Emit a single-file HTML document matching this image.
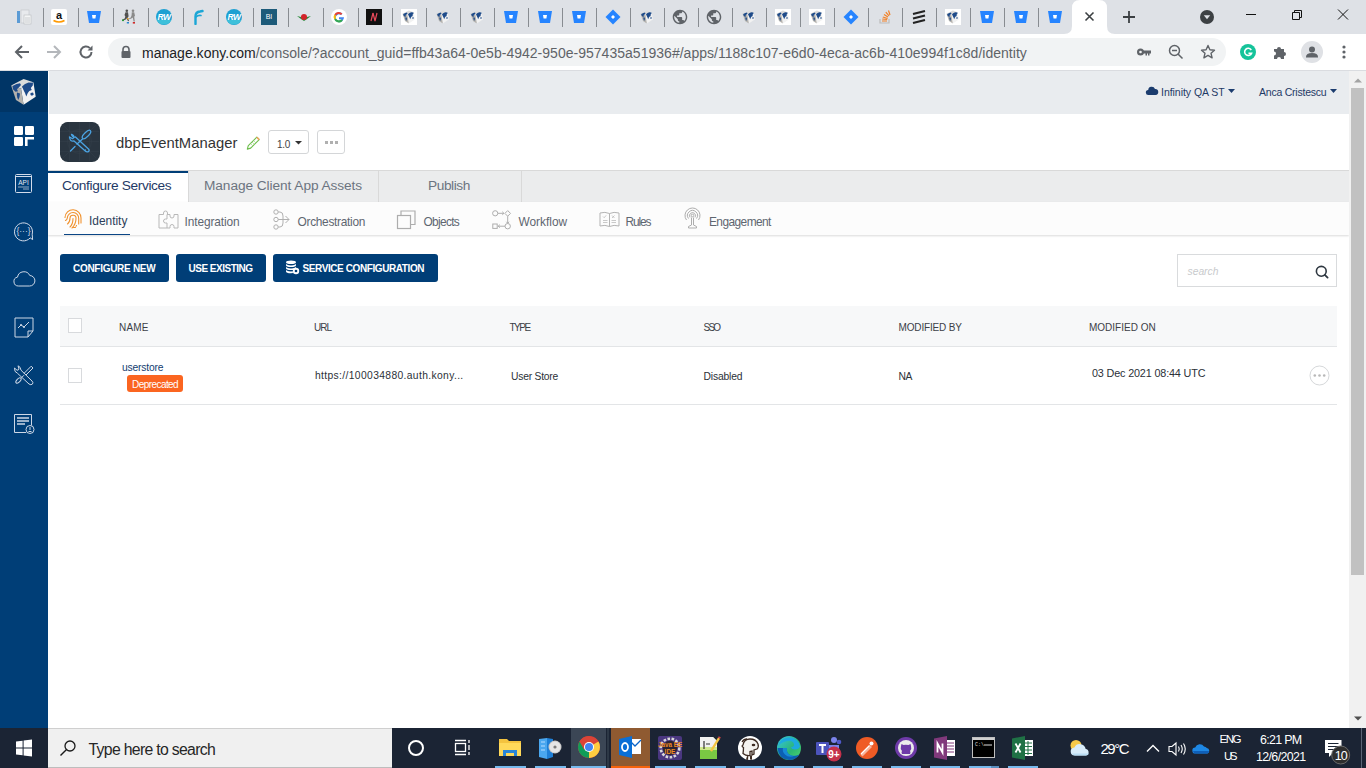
<!DOCTYPE html>
<html><head><meta charset="utf-8">
<style>
*{box-sizing:border-box;margin:0;padding:0}
html,body{width:1366px;height:768px;overflow:hidden;background:#fff;font-family:"Liberation Sans",sans-serif;position:relative}
.abs{position:absolute}
svg.abs{overflow:visible}
#tabstrip{left:0;top:0;width:1366px;height:34px;background:#dee1e6}
.sep{position:absolute;top:8px;width:1px;height:19px;background:#888c91}
.fav{position:absolute;top:9px;width:16px;height:16px}
#acttab{left:1064px;top:0;width:51px;height:34px}
#toolbar{left:0;top:34px;width:1366px;height:36px;background:#fff}
#tbline{left:0;top:70px;width:1366px;height:1px;background:#dadce0}
#omni{left:108px;top:38px;width:1118px;height:28px;border-radius:14px;background:#f1f3f4}
#url{left:142px;top:44px;font-size:14px;line-height:16px;color:#5f6368;white-space:nowrap;letter-spacing:0}
#url b{font-weight:normal;color:#202124}
#sidebar{left:0;top:71px;width:48px;height:657px;background:#003e77}
#sbtop{left:0;top:71px;width:48px;height:41px;background:#003566}
#hdr{left:49px;top:71px;width:1300px;height:43px;background:#e9ecef}
.hdrtxt{position:absolute;top:85px;font-size:10.5px;line-height:12px;color:#1f3a66;white-space:nowrap}
#scroll{left:1349px;top:71px;width:17px;height:657px;background:#f1f1f1}
#thumb{left:1351px;top:88px;width:13px;height:487px;background:#c1c1c1}
#tabs{left:48px;top:170px;width:1301px;height:33px;background:#ebeced;border-top:1px solid #d9d9d9;border-bottom:1px solid #d9d9d9}
#subtabs{left:48px;top:202px;width:1301px;height:33px;background:#fcfcfc;box-shadow:0 1px 2px rgba(0,0,0,.15)}
.tab{position:absolute;top:178px;font-size:13.7px;line-height:16px;color:#6b7480;white-space:nowrap}
.stab{position:absolute;top:214px;font-size:11.9px;line-height:14px;color:#5e6670;white-space:nowrap}
.btn{position:absolute;top:254px;height:28px;background:#003e77;border-radius:3px}
.btxt{position:absolute;top:261px;color:#fff;font-weight:bold;font-size:10px;line-height:14px;white-space:nowrap}
#thead{left:60px;top:306px;width:1277px;height:41px;background:#f7f8f9;border-bottom:1px solid #e3e5e7}
#trow{left:60px;top:347px;width:1277px;height:58px;background:#fff;border-bottom:1px solid #e3e5e7}
.th{position:absolute;top:321px;font-size:10px;line-height:12px;color:#3b4047;white-space:nowrap}
.td{position:absolute;top:369px;font-size:10.3px;line-height:12px;color:#2b3037;white-space:nowrap}
.cb{position:absolute;width:14px;height:15px;border:1px solid #d8dadd;background:#fff}
#taskbar{left:0;top:728px;width:1366px;height:40px;background:#1b2434}
#tsearch{left:48px;top:728px;width:344px;height:40px;background:#f0f0f0;border-top:1px solid #cfcfcf;border-bottom:1px solid #bdbdbd}
</style></head><body>
<svg width="0" height="0" style="position:absolute">
<defs>
<symbol id="i-doc" viewBox="0 0 16 16"><rect x="1" y="2" width="3" height="12" fill="#5b9bd5"/><rect x="5" y="1" width="8" height="13" fill="#e8eaed" stroke="#c0c4c8" stroke-width=".6"/><rect x="8" y="6" width="7" height="9" fill="#f4f5f6" stroke="#b8bcc0" stroke-width=".6"/><path d="M9 9h5M9 11h5M9 13h5" stroke="#b0b4b8" stroke-width=".6"/></symbol>
<symbol id="i-amz" viewBox="0 0 16 16"><rect x="0" y="0" width="16" height="16" rx="2" fill="#fff"/><text x="8" y="10" font-family="Liberation Sans" font-weight="bold" font-size="11" text-anchor="middle" fill="#111">a</text><path d="M2.5 11.5q5.5 3 11 0" stroke="#f90" stroke-width="1.6" fill="none"/></symbol>
<symbol id="i-bb" viewBox="0 0 16 16"><path d="M1 2h14l-2 12H3z" fill="#2684ff"/><path d="M6 6h4l-.6 3.4H6.6z" fill="#fff"/></symbol>
<symbol id="i-run" viewBox="0 0 16 16"><g fill="#505050"><circle cx="5.8" cy="1.8" r="1.3"/><path d="M4.5 3.3h2.5l.6 4-1 1.5 1.5 3-1 .5-1.8-3-.8 1.5-3 .8-.3-.8 2.5-1.2.6-2-.8-1.5z"/></g><g fill="#8a8a8a"><circle cx="12" cy="1.8" r="1.3"/><path d="M10.8 3.3h2.4l.8 3.5-.8 1 .6 4.7h-1.2l-.8-4-1.5 1-2 .7-.3-.8 1.8-1 .8-2.2z"/></g><rect x="1" y="10.5" width="2" height="1.6" fill="#2a9a3a"/><rect x="6" y="9" width="1.6" height="1.4" fill="#e8a020"/><rect x="5.8" y="13" width="2.2" height="1.5" fill="#2a8ad0"/><rect x="11.8" y="13" width="2.2" height="1.6" fill="#d02a2a"/></symbol>
<symbol id="i-rw" viewBox="0 0 16 16"><circle cx="8" cy="8" r="8" fill="#1ea0d2"/><path d="M0.8 11a8 8 0 0 0 14.4 0z" fill="#3ec0da"/><text x="8" y="11.2" font-family="Liberation Sans" font-weight="bold" font-style="italic" font-size="8.5" text-anchor="middle" fill="#fff" letter-spacing="-.6">RW</text></symbol>
<symbol id="i-f" viewBox="0 0 16 16"><path d="M4.5 15V7.5Q4.5 3 9 2.5l2.5-.5" fill="none" stroke="#1ba6d6" stroke-width="2.4" stroke-linecap="round"/><path d="M5 8q2-2 5-1.5" fill="none" stroke="#1ba6d6" stroke-width="1.6" stroke-linecap="round"/></symbol>
<symbol id="i-bi" viewBox="0 0 16 16"><rect width="16" height="16" fill="#1d5b7a"/><text x="8" y="10" font-family="Liberation Sans" font-size="7" text-anchor="middle" fill="#fff">BI</text></symbol>
<symbol id="i-red" viewBox="0 0 16 16"><path d="M1 7l4 1 3-2 3 2 4-1-4 3-3 2-3-2z" fill="#2a8a3a"/><circle cx="8" cy="8" r="3" fill="#d2232a"/></symbol>
<symbol id="i-g" viewBox="0 0 16 16"><circle cx="8" cy="8" r="8" fill="#fff"/><path d="M13 8.2h-5v2h2.8a3.2 3.2 0 1 1-.8-4.2l1.4-1.4A5 5 0 1 0 13 8.2z" fill="#4285f4"/><path d="M3.3 5.5A5 5 0 0 1 11.4 4.6L10 6A3.2 3.2 0 0 0 5 6.6z" fill="#ea4335"/><path d="M3.3 5.5L5 6.6a3.2 3.2 0 0 0 0 2.8L3.3 10.6a5 5 0 0 1 0-5.1z" fill="#fbbc05"/><path d="M3.3 10.6L5 9.4a3.2 3.2 0 0 0 5.2.9l1.6 1.3A5 5 0 0 1 3.3 10.6z" fill="#34a853"/></symbol>
<symbol id="i-nf" viewBox="0 0 16 16"><rect width="16" height="16" fill="#111"/><path d="M5 12l2-8M7 4l2 8M9 12l2-8" stroke="#e84a5a" stroke-width="1.2"/></symbol>
<symbol id="i-cube" viewBox="0 0 32 32"><path d="M3.1 9.4L15.6 3.1 25.4 6.3 13 12.5z" fill="#dcdcdc"/><path d="M13 12.5L25.4 6.3 27.7 20.8 15.6 28.8z" fill="#f2f2f2"/><path d="M3.1 9.4L13 12.5 15.6 28.8 8 24z" fill="#b4b2ae"/><g fill="#1e4b8a"><path d="M4.5 10l4-2 3.5-.8 1 1.8-2 2.2-2 2 1 2-2.5.5-2.5-2.5z"/><path d="M14 10.5l3-2.5 3.5-1.5 4.5.3-.2 2.7-2 2.5 1 2-2.5 1-1.5 2-1.5 3.5-1.3-3.5-1.5-3z"/><path d="M9 16.5l3 1-.5 3.5-1.2 3-1-2.5-.5-2.5z"/><path d="M22.5 17l2.5-.5.8 2-1.8 1.2-1.5-.7z"/></g></symbol>
<symbol id="i-cubew" viewBox="0 0 16 16"><rect width="16" height="16" fill="#fff"/><use href="#i-cube"/></symbol>
<symbol id="i-jira" viewBox="0 0 16 16"><path d="M8 0.5L15.5 8 8 15.5 0.5 8z" fill="#2684ff"/><path d="M8 6L10 8 8 10 6 8z" fill="#fff"/></symbol>
<symbol id="i-globe" viewBox="1 1 22 22"><path d="M12 2C6.48 2 2 6.48 2 12s4.48 10 10 10 10-4.48 10-10S17.52 2 12 2zm-1 17.930c-3.950-.49-7-3.850-7-7.930 0-.62.08-1.210.21-1.790L9 15v1c0 1.100.9 2 2 2v1.930zm6.900-2.540c-.26-.81-1-1.390-1.900-1.390h-1v-3c0-.55-.45-1-1-1H8v-2h2c.55 0 1-.45 1-1V7h2c1.100 0 2-.9 2-2v-.41c2.930 1.190 5 4.060 5 7.410 0 2.080-.8 3.970-2.100 5.390z" fill="#5f6368"/></symbol>
<symbol id="i-so" viewBox="0 0 16 16"><path d="M3 10v4h9v-4" stroke="#bcbbbb" stroke-width="1.2" fill="none"/><path d="M5 12h5M5.2 10l5 .5M5.8 8l4.8 1.5M7 5.5l4 2.5M8.8 3.2l3.2 3.6M11.5 1.5l1.5 4.5" stroke="#f48024" stroke-width="1.2"/></symbol>
<symbol id="i-stripes" viewBox="0 0 16 16"><path d="M2 5l12-3M2 9.5l12-3M2 14l12-3" stroke="#222" stroke-width="2.2"/></symbol>
</defs></svg>

<div id="tabstrip" class="abs"></div>
<div class="sep" style="left:43px"></div>
<div class="sep" style="left:78px"></div>
<div class="sep" style="left:113px"></div>
<div class="sep" style="left:148px"></div>
<div class="sep" style="left:183px"></div>
<div class="sep" style="left:218px"></div>
<div class="sep" style="left:253px"></div>
<div class="sep" style="left:288px"></div>
<div class="sep" style="left:323px"></div>
<div class="sep" style="left:358px"></div>
<div class="sep" style="left:392px"></div>
<div class="sep" style="left:426px"></div>
<div class="sep" style="left:460px"></div>
<div class="sep" style="left:494px"></div>
<div class="sep" style="left:528px"></div>
<div class="sep" style="left:562px"></div>
<div class="sep" style="left:596px"></div>
<div class="sep" style="left:630px"></div>
<div class="sep" style="left:664px"></div>
<div class="sep" style="left:698px"></div>
<div class="sep" style="left:732px"></div>
<div class="sep" style="left:766px"></div>
<div class="sep" style="left:800px"></div>
<div class="sep" style="left:834px"></div>
<div class="sep" style="left:868px"></div>
<div class="sep" style="left:902px"></div>
<div class="sep" style="left:936px"></div>
<div class="sep" style="left:970px"></div>
<div class="sep" style="left:1004px"></div>
<div class="sep" style="left:1038px"></div>
<svg class="fav" style="left:16px" viewBox="0 0 16 16"><use href="#i-doc"/></svg>
<svg class="fav" style="left:51px" viewBox="0 0 16 16"><use href="#i-amz"/></svg>
<svg class="fav" style="left:86px" viewBox="0 0 16 16"><use href="#i-bb"/></svg>
<svg class="fav" style="left:121px" viewBox="0 0 16 16"><use href="#i-run"/></svg>
<svg class="fav" style="left:156px" viewBox="0 0 16 16"><use href="#i-rw"/></svg>
<svg class="fav" style="left:191px" viewBox="0 0 16 16"><use href="#i-f"/></svg>
<svg class="fav" style="left:226px" viewBox="0 0 16 16"><use href="#i-rw"/></svg>
<svg class="fav" style="left:261px" viewBox="0 0 16 16"><use href="#i-bi"/></svg>
<svg class="fav" style="left:296px" viewBox="0 0 16 16"><use href="#i-red"/></svg>
<svg class="fav" style="left:331px" viewBox="0 0 16 16"><use href="#i-g"/></svg>
<svg class="fav" style="left:366px" viewBox="0 0 16 16"><use href="#i-nf"/></svg>
<svg class="fav" style="left:401px" viewBox="0 0 16 16"><use href="#i-cubew"/></svg>
<svg class="fav" style="left:435px" viewBox="0 0 16 16"><use href="#i-cube"/></svg>
<svg class="fav" style="left:469px" viewBox="0 0 16 16"><use href="#i-cube"/></svg>
<svg class="fav" style="left:503px" viewBox="0 0 16 16"><use href="#i-bb"/></svg>
<svg class="fav" style="left:537px" viewBox="0 0 16 16"><use href="#i-bb"/></svg>
<svg class="fav" style="left:571px" viewBox="0 0 16 16"><use href="#i-bb"/></svg>
<svg class="fav" style="left:605px" viewBox="0 0 16 16"><use href="#i-jira"/></svg>
<svg class="fav" style="left:639px" viewBox="0 0 16 16"><use href="#i-cube"/></svg>
<svg class="fav" style="left:672px" viewBox="0 0 16 16"><use href="#i-globe"/></svg>
<svg class="fav" style="left:706px" viewBox="0 0 16 16"><use href="#i-globe"/></svg>
<svg class="fav" style="left:741px" viewBox="0 0 16 16"><use href="#i-cube"/></svg>
<svg class="fav" style="left:775px" viewBox="0 0 16 16"><use href="#i-cubew"/></svg>
<svg class="fav" style="left:809px" viewBox="0 0 16 16"><use href="#i-cubew"/></svg>
<svg class="fav" style="left:843px" viewBox="0 0 16 16"><use href="#i-jira"/></svg>
<svg class="fav" style="left:877px" viewBox="0 0 16 16"><use href="#i-so"/></svg>
<svg class="fav" style="left:911px" viewBox="0 0 16 16"><use href="#i-stripes"/></svg>
<svg class="fav" style="left:945px" viewBox="0 0 16 16"><use href="#i-cubew"/></svg>
<svg class="fav" style="left:979px" viewBox="0 0 16 16"><use href="#i-bb"/></svg>
<svg class="fav" style="left:1013px" viewBox="0 0 16 16"><use href="#i-bb"/></svg>
<svg class="fav" style="left:1047px" viewBox="0 0 16 16"><use href="#i-bb"/></svg>
<svg id="acttab" class="abs" viewBox="0 0 51 34"><path d="M0 34q8 0 8-8V8q0-8 8-8h19q8 0 8 8v18q0 8 8 8z" fill="#fff"/><path d="M21.5 12.5l8 8M29.5 12.5l-8 8" stroke="#3c4043" stroke-width="1.6"/></svg>
<svg class="abs" style="left:1122px;top:10px" width="14" height="14" viewBox="0 0 14 14"><path d="M7 1v12M1 7h12" stroke="#3c4043" stroke-width="1.8"/></svg>
<svg class="abs" style="left:1200px;top:10px" width="14" height="14" viewBox="0 0 14 14"><circle cx="7" cy="7" r="7" fill="#3c4043"/><path d="M3.8 5.3h6.4L7 9.3z" fill="#dee1e6"/></svg>
<svg class="abs" style="left:1240px;top:4px" width="22" height="22" viewBox="0 0 22 22"><path d="M6 10.5h10" stroke="#111" stroke-width="1"/></svg>
<svg class="abs" style="left:1286px;top:4px" width="22" height="22" viewBox="0 0 22 22"><path d="M6.5 8.5h7v7h-7z M8.5 8.5v-2h7v7h-2" stroke="#111" stroke-width="1" fill="none"/></svg>
<svg class="abs" style="left:1332px;top:4px" width="22" height="22" viewBox="0 0 22 22"><path d="M6 5.5l10 10M16 5.5l-10 10" stroke="#111" stroke-width="1"/></svg>
<div id="toolbar" class="abs"></div>
<svg class="abs" style="left:12px;top:42px" width="20" height="20" viewBox="0 0 20 20"><path d="M17 10H4.5M10 4l-6 6 6 6" stroke="#5f6368" stroke-width="2" fill="none"/></svg>
<svg class="abs" style="left:44px;top:42px" width="20" height="20" viewBox="0 0 20 20"><path d="M3 10h12.5M10 4l6 6-6 6" stroke="#b4b7bb" stroke-width="2" fill="none"/></svg>
<svg class="abs" style="left:76px;top:42px" width="20" height="20" viewBox="0 0 20 20"><path d="M15.5 10a5.5 5.5 0 1 1-1.6-3.9" stroke="#5f6368" stroke-width="2" fill="none"/><path d="M16.5 3.5v5h-5z" fill="#5f6368"/></svg>
<div id="omni" class="abs"></div>
<svg class="abs" style="left:120px;top:45px" width="12" height="14" viewBox="0 0 12 14"><path d="M3 6V4.5a3 3 0 0 1 6 0V6" stroke="#5f6368" stroke-width="1.6" fill="none"/><rect x="1.5" y="6" width="9" height="7" rx="1" fill="#5f6368"/></svg>
<div id="url" class="abs" style="left:142.0px;top:45.0px;letter-spacing:0.02px;"><b>manage.kony.com</b>/console/?account_guid=ffb43a64-0e5b-4942-950e-957435a51936#/apps/1188c107-e6d0-4eca-ac6b-410e994f1c8d/identity</div>
<svg class="abs" style="left:1136px;top:45px" width="16" height="14" viewBox="0 0 16 14"><circle cx="4.5" cy="7" r="3.5" fill="#5f6368"/><circle cx="4.5" cy="7" r="1.3" fill="#f1f3f4"/><path d="M7 5.6h8v2.8h-1.5v2h-1.5v-2h-1v2h-1.5v-2H7z" fill="#5f6368"/></svg>
<svg class="abs" style="left:1168px;top:44px" width="16" height="16" viewBox="0 0 16 16"><circle cx="6.5" cy="6.5" r="5" stroke="#5f6368" stroke-width="1.5" fill="none"/><path d="M4 6.5h5M10 10l4.5 4.5" stroke="#5f6368" stroke-width="1.5"/></svg>
<svg class="abs" style="left:1200px;top:44px" width="16" height="16" viewBox="0 0 16 16"><path d="M8 1.5l1.9 4.3 4.6.4-3.5 3 1.1 4.6L8 11.4l-4.1 2.4 1.1-4.6-3.5-3 4.6-.4z" stroke="#5f6368" stroke-width="1.4" fill="none" stroke-linejoin="round"/></svg>
<svg class="abs" style="left:1240px;top:44px" width="16" height="16" viewBox="0 0 16 16"><circle cx="8" cy="8" r="8" fill="#15c39a"/><path d="M11.3 6A3.6 3.6 0 1 0 11.6 9.2H8.5" stroke="#fff" stroke-width="1.6" fill="none"/></svg>
<svg class="abs" style="left:1272px;top:44px" width="16" height="16" viewBox="0 0 16 16"><path d="M2 5h3a2 2 0 1 1 4 0h3v3a2 2 0 1 1 0 4v3H9a2 2 0 1 0-4 0H2v-3.5a2 2 0 1 0 0-4z" fill="#5f6368"/></svg>
<svg class="abs" style="left:1301px;top:41px" width="22" height="22" viewBox="0 0 22 22"><circle cx="11" cy="11" r="11" fill="#dfe1e5"/><circle cx="11" cy="8.5" r="3" fill="#5f6368"/><path d="M5 16q0-4 6-4t6 4v.5H5z" fill="#5f6368"/></svg>
<svg class="abs" style="left:1341px;top:45px" width="6" height="14" viewBox="0 0 6 14"><circle cx="3" cy="2" r="1.6" fill="#5f6368"/><circle cx="3" cy="7" r="1.6" fill="#5f6368"/><circle cx="3" cy="12" r="1.6" fill="#5f6368"/></svg>
<div id="tbline" class="abs"></div>

<!--PAGE-->
<div id="sidebar" class="abs"></div>
<div id="sbtop" class="abs"></div>
<svg class="abs" style="left:8px;top:76px" width="32" height="32" viewBox="0 0 32 32"><use href="#i-cube"/></svg>
<svg class="abs" style="left:13px;top:125px" width="22" height="21" viewBox="0 0 22 21"><rect x="1" y="1" width="9" height="9" rx="1.2" fill="#fff"/><rect x="12" y="1" width="9" height="9" rx="1.2" fill="#fff"/><rect x="1" y="12" width="9" height="9" rx="1.2" fill="#fff"/><path d="M12 12h9v2.6h-6.4V21H12z" fill="#fff"/></svg>
<svg class="abs" style="left:14px;top:173px" width="20" height="21" viewBox="0 0 20 21"><rect x="1.5" y="1.5" width="16" height="18" rx="1" fill="none" stroke="#d3dceb" stroke-width="1"/><path d="M1.5 3.5h16" stroke="#d3dceb" stroke-width="1"/><text x="9.5" y="12" font-family="Liberation Sans" font-size="6.5" text-anchor="middle" fill="#e3e9f2">API</text><path d="M4 14h11M9 16h6" stroke="#b9c6d8" stroke-width=".8"/></svg>
<svg class="abs" style="left:13px;top:221px" width="22" height="21" viewBox="0 0 22 21"><path d="M17.2 16.9A9 9 0 1 1 19.2 13.2L19.6 18.6z" fill="none" stroke="#d3dceb" stroke-width="1" stroke-linejoin="round"/><text x="10.5" y="13.3" font-family="Liberation Sans" font-size="8.5" text-anchor="middle" fill="#d3dceb">{···}</text></svg>
<svg class="abs" style="left:13px;top:270px" width="22" height="17" viewBox="0 0 22 17"><path d="M5.5 16A4.5 4.5 0 0 1 4.5 7.1 6.5 6.5 0 0 1 16.8 5.5 5.2 5.2 0 0 1 16.5 16z" fill="none" stroke="#cdd7e6" stroke-width="1"/></svg>
<svg class="abs" style="left:14px;top:317px" width="20" height="21" viewBox="0 0 20 21"><path d="M1 1h18v13l-5 6H1z" fill="none" stroke="#cdd7e6" stroke-width="1"/><path d="M19 14h-5v6" fill="none" stroke="#cdd7e6" stroke-width="1"/><path d="M4 11l3-3 3 2 5-5" fill="none" stroke="#cdd7e6" stroke-width="1"/><circle cx="7" cy="8" r="1" fill="#cdd7e6"/><circle cx="10" cy="10" r="1" fill="#cdd7e6"/></svg>
<svg class="abs" style="left:13px;top:365px" width="21" height="21" viewBox="0 0 21 21"><g fill="none" stroke="#cdd7e6" stroke-width="1" stroke-linejoin="round"><path d="M1.5 3Q1 7 4.5 8.3L16 19Q18 20.5 19.5 19 20.5 17.5 19 16L8 5.2Q7.5 1.5 5 .8L6 4Q5.5 5.5 4 5.2z"/><path d="M18.2 1.2L20 3l-7 7-1.8-1.8z"/><path d="M11 10.2l-2.5 2.5"/><ellipse cx="5.5" cy="15.5" rx="3.3" ry="1.7" transform="rotate(-45 5.5 15.5)"/></g></svg>
<svg class="abs" style="left:13px;top:413px" width="22" height="21" viewBox="0 0 22 21"><path d="M1.5 1.5h17v11M13 19.5H1.5v-18" fill="none" stroke="#cdd7e6" stroke-width="1"/><path d="M4 5h12M4 8h12M4 11h8" stroke="#cdd7e6" stroke-width="1.3"/><circle cx="17" cy="16.5" r="4" fill="none" stroke="#cdd7e6" stroke-width="1"/><path d="M17 14v3M15.5 18.5h3" stroke="#cdd7e6" stroke-width="1"/></svg>
<div id="hdr" class="abs"></div>
<svg class="abs" style="left:1146px;top:86px" width="12" height="9" viewBox="0 0 12 9"><path d="M2.5 9a2.5 2.5 0 0 1-.3-5A3.5 3.5 0 0 1 9 3a3 3 0 0 1 .5 6z" fill="#1b3c6e"/></svg>
<div id="t_inf" class="hdrtxt" style="left:1161.0px;top:86.0px;letter-spacing:-0.04px;">Infinity QA ST</div>
<svg class="abs" style="left:1228px;top:89px" width="7" height="4" viewBox="0 0 7 4"><path d="M0 0h7L3.5 4z" fill="#1b3c6e"/></svg>
<div id="t_anca" class="hdrtxt" style="left:1259.0px;top:86.0px;letter-spacing:-0.23px;">Anca Cristescu</div>
<svg class="abs" style="left:1330px;top:89px" width="7" height="4" viewBox="0 0 7 4"><path d="M0 0h7L3.5 4z" fill="#1b3c6e"/></svg>

<div class="abs" style="left:60px;top:122px;width:40px;height:40px;border-radius:8px;background:#2a3640"></div>
<div id="t_title" class="abs" style="left:116.0px;top:133.5px;letter-spacing:0.04px;font-size:14.8px;line-height:18px;color:#333;white-space:nowrap">dbpEventManager</div>
<div class="abs" style="left:268px;top:130px;width:41px;height:24px;border:1px solid #d4d6d8;border-radius:3px;background:#fff"></div>
<div id="t_ver" class="abs" style="left:277.0px;top:138.5px;letter-spacing:-0.25px;font-size:10px;line-height:12px;color:#444">1.0</div>
<div class="abs" style="left:317px;top:130px;width:28px;height:24px;border:1px solid #d4d6d8;border-radius:3px;background:#fff"></div>


<svg class="abs" style="left:60px;top:122px" width="40" height="40" viewBox="0 0 40 40"><rect x="0" y="0" width="39" height="39" rx="9" fill="#2a3540"/><path d="M0 19.5h39M19.5 0v39M0 9.5h39M0 29.5h39M9.5 0v39M29.5 0v39M3 3l33 33M36 3L3 36" stroke="#35404a" stroke-width=".5"/><circle cx="19.5" cy="19.5" r="12" fill="none" stroke="#35404a" stroke-width=".5"/><g fill="none" stroke="#4ba3e2" stroke-width="1.3" stroke-linecap="round" stroke-linejoin="round"><path d="M11.5 12.5q1 3 4 2.5l13 12q1.5 1.8-.5 2.8-1.5.5-3-1L14 19q-4 1-4.5-4l1 .5 2 1.2 1.5-1.2-.5-2-1.5-1z"/><ellipse cx="26.5" cy="12.5" rx="5.5" ry="2.2" transform="rotate(-45 26.5 12.5)"/><path d="M22.5 17L17 22M15 24.5L10.5 29"/></g><circle cx="25.5" cy="28" r=".7" fill="#4ba3e2"/></svg>
<svg class="abs" style="left:246px;top:136px" width="15" height="14" viewBox="0 0 15 14"><path d="M10.8 1.2l2.4 2.4-8.5 8.5-3.4 1 1-3.4z" fill="none" stroke="#6dbd4b" stroke-width="1.1" stroke-linejoin="round"/><path d="M4.5 7.5l2.4 2.4M6 6l2.4 2.4M7.5 4.5l2.4 2.4" stroke="#9ad17f" stroke-width=".6"/><path d="M10.8 1.2l2.4 2.4" stroke="#f2a35f" stroke-width="1.6"/></svg>
<svg class="abs" style="left:295px;top:141px" width="7" height="4" viewBox="0 0 7 4"><path d="M0 0h7L3.5 3.5z" fill="#333"/></svg>
<div class="abs" style="left:325px;top:141px;width:3px;height:3px;background:#b0b0b0"></div>
<div class="abs" style="left:330px;top:141px;width:3px;height:3px;background:#b0b0b0"></div>
<div class="abs" style="left:335px;top:141px;width:3px;height:3px;background:#b0b0b0"></div>
<div id="tabs" class="abs"></div>
<div class="abs" style="left:48px;top:171px;width:140px;height:32px;background:#fff;border-top:2px solid #003e77"></div>
<div class="abs" style="left:188px;top:171px;width:1px;height:31px;background:#d9d9d9"></div>
<div class="abs" style="left:378px;top:171px;width:1px;height:31px;background:#d9d9d9"></div>
<div class="abs" style="left:521px;top:171px;width:1px;height:31px;background:#d9d9d9"></div>
<div id="t_cs" class="tab" style="left:62.0px;top:177.5px;letter-spacing:-0.35px;color:#1f3a66">Configure Services</div>
<div id="t_mca" class="tab" style="left:204.0px;top:177.5px;letter-spacing:-0.07px;">Manage Client App Assets</div>
<div id="t_pub" class="tab" style="left:428.0px;top:178.0px;letter-spacing:-0.42px;">Publish</div>
<div id="subtabs" class="abs"></div>
<svg class="abs" style="left:63px;top:209px" width="20" height="20" viewBox="0 0 20 20"><g fill="none" stroke="#f0922e" stroke-width="1.1" stroke-linecap="round"><path d="M2 8.5A8 8 0 0 1 18 9v5"/><path d="M2.5 11.5Q4 11 4.3 9A5.7 5.7 0 0 1 15.7 9.5v5.5"/><path d="M4.5 15q2.5-2 2.5-6a3 3 0 0 1 6 .5Q13 15 9 19"/><path d="M7 18q3-3 3-8.5"/><path d="M10.5 18.5h2M13 17.3l.5-.8"/></g></svg>
<svg class="abs" style="left:158px;top:210px" width="21" height="19" viewBox="0 0 21 19"><path d="M1 4.5h4.5V3a2 2 0 0 1 4 0v1.5H9v4.5H7.5a2 2 0 0 0 0 4H9V18H1z" fill="none" stroke="#b8b8b8" stroke-width="1"/><path d="M9 4.5h3v1.5a2 2 0 0 0 4 0V4.5h4V18h-4v-1.5a2 2 0 0 0-4 0V18H9" fill="none" stroke="#b8b8b8" stroke-width="1"/></svg>
<svg class="abs" style="left:273px;top:209px" width="18" height="21" viewBox="0 0 18 21"><g fill="none" stroke="#b0b0b0" stroke-width="1"><circle cx="3" cy="3" r="2.2"/><circle cx="3" cy="10.5" r="2.2"/><circle cx="3" cy="18" r="2.2"/><path d="M5.2 3H7q3 0 3 4v3.5M5.2 10.5H16M5.2 18H7q3 0 3-4v-3.5M12.5 7l3.5 3.5-3.5 3.5"/></g></svg>
<svg class="abs" style="left:396px;top:209px" width="21" height="21" viewBox="0 0 21 21"><g fill="none" stroke="#adadad" stroke-width="1.2"><rect x="1.5" y="6.5" width="13" height="13"/><path d="M5 6.5V2h14v13.5h-4.5"/></g></svg>
<svg class="abs" style="left:492px;top:210px" width="20" height="20" viewBox="0 0 20 20"><g fill="none" stroke="#adadad" stroke-width="1"><circle cx="3.2" cy="3.3" r="2.6"/><path d="M5.8 3.3h6M10.3 1.8l1.6 1.5-1.6 1.5"/><path d="M15.7 .6l2.8 2.8-2.8 2.8-2.8-2.8z"/><path d="M15.7 6.2v7M14.3 11.8l1.4 1.4 1.4-1.4"/><circle cx="15.7" cy="16.2" r="2.7"/><path d="M13 16.2H6.2M7.8 14.7l-1.6 1.5 1.6 1.5"/><rect x=".8" y="14" width="4.4" height="4.4"/></g></svg>
<svg class="abs" style="left:599px;top:211px" width="21" height="17" viewBox="0 0 21 17"><g fill="none" stroke="#b3b3b3" stroke-width="1"><path d="M10.5 2.5Q6 .5 1 2v13q5-1.5 9.5.5 4.5-2 9.5-.5V2q-5-1.5-9.5.5zM10.5 2.5v13"/><path d="M4 5.5l1.2 1.2 2-2.4M4 9.5h4.5M4 11.5h4.5M13 4.5l2.5 2.5M15.5 4.5L13 7M12.5 9.5h4.5M12.5 11.5h4.5" stroke-width=".7"/></g></svg>
<svg class="abs" style="left:685px;top:209px" width="15" height="20" viewBox="0 0 15 20"><g fill="none" stroke="#adadad" stroke-width="1"><path d="M3.5 9.5a5 5 0 1 1 8 0"/><path d="M5 8.3a3 3 0 1 1 5 0"/><circle cx="7.5" cy="6.5" r="1.3"/><path d="M6.5 8.5v7.5l-3 1.5v1.5h8v-1.5l-3-1.5V8.5"/><path d="M1.5 11a7.5 7.5 0 1 1 12 0"/></g></svg>
<div id="t_id" class="stab" style="left:89.0px;top:214.0px;letter-spacing:-0.0px;color:#2c3e5a">Identity</div>
<div class="abs" style="left:64px;top:233.6px;width:66px;height:1.4px;background:#0a4585"></div>
<div id="t_int" class="stab" style="left:184.5px;top:214.5px;letter-spacing:-0.1px;">Integration</div>
<div id="t_orch" class="stab" style="left:297.5px;top:214.5px;letter-spacing:-0.29px;">Orchestration</div>
<div id="t_obj" class="stab" style="left:423.5px;top:214.5px;letter-spacing:-0.67px;">Objects</div>
<div id="t_wf" class="stab" style="left:518.5px;top:214.5px;letter-spacing:-0.0px;">Workflow</div>
<div id="t_rules" class="stab" style="left:625.5px;top:214.5px;letter-spacing:-1.09px;">Rules</div>
<div id="t_eng" class="stab" style="left:709.0px;top:214.5px;letter-spacing:-0.56px;">Engagement</div>

<div class="btn" style="left:60px;width:109px"></div><div id="b1" class="btxt" style="left:73.0px;top:261.5px;letter-spacing:-0.29px;">CONFIGURE NEW</div>
<div class="btn" style="left:176px;width:90px"></div><div id="b2" class="btxt" style="left:188.5px;top:261.5px;letter-spacing:-0.5px;">USE EXISTING</div>
<div class="btn" style="left:273px;width:165px"></div><div id="b3" class="btxt" style="left:302.5px;top:262.0px;letter-spacing:-0.41px;">SERVICE CONFIGURATION</div>

<div class="abs" style="left:1177px;top:254px;width:160px;height:33px;border:1px solid #d9dbdd;background:#fff"></div>
<div id="s_ph" class="abs" style="left:1187.5px;top:266.0px;letter-spacing:0.0px;font-size:10.3px;line-height:12px;color:#c8cacc;font-style:italic">search</div>
<svg class="abs" style="left:1315px;top:265px" width="14" height="14" viewBox="0 0 14 14"><circle cx="6.3" cy="6.3" r="4.9" fill="none" stroke="#2f3841" stroke-width="1.6"/><path d="M9.8 9.8l2.8 2.8" stroke="#2f3841" stroke-width="1.8" stroke-linecap="round"/></svg>
<svg class="abs" style="left:285px;top:260px" width="15" height="15" viewBox="0 0 15 15"><g fill="#fff"><ellipse cx="6" cy="2.3" rx="5" ry="1.8"/><path d="M1 3.6q0 1.8 5 1.8t5-1.8v1.6q0 1.8-5 1.8T1 5.2z"/><path d="M1 6.6q0 1.8 5 1.8t5-1.8v1.6q0 1.8-5 1.8T1 8.2z"/><path d="M1 9.6q0 1.8 5 1.8 1 0 1.8-.1a3.5 3.5 0 0 0 .3 1.8q-.9.1-2.1.1-5 0-5-1.8z"/><circle cx="11" cy="11" r="3.2"/></g><circle cx="11" cy="11" r="1.3" fill="#003e77"/></svg>

<div id="thead" class="abs"></div>
<div id="trow" class="abs"></div>
<div class="cb" style="left:68px;top:318px"></div>
<div class="cb" style="left:68px;top:368px"></div>
<div id="h_name" class="th" style="left:119.0px;top:321.5px;letter-spacing:0.17px;">NAME</div>
<div id="h_url" class="th" style="left:314.0px;top:322.0px;letter-spacing:-1.0px;">URL</div>
<div id="h_type" class="th" style="left:509.5px;top:322.0px;letter-spacing:-1.49px;">TYPE</div>
<div id="h_sso" class="th" style="left:703.5px;top:322.0px;letter-spacing:-1.75px;">SSO</div>
<div id="h_mb" class="th" style="left:898.5px;top:322.0px;letter-spacing:-0.15px;">MODIFIED BY</div>
<div id="h_mo" class="th" style="left:1089.0px;top:322.0px;letter-spacing:0.0px;">MODIFIED ON</div>
<div id="d_name" class="td" style="left:122.0px;top:362.0px;letter-spacing:-0.19px;color:#123d70">userstore</div>
<div class="abs" style="left:127px;top:375px;width:56px;height:17px;border-radius:3px;background:#fb6520"></div><div id="d_badge" class="abs" style="left:132.0px;top:379.0px;letter-spacing:-0.56px;color:#fff;font-size:10px;line-height:12px;white-space:nowrap">Deprecated</div>
<div id="d_url" class="td" style="left:315.0px;top:370.0px;letter-spacing:0.36px;">https://100034880.auth.kony...</div>
<div id="d_type" class="td" style="left:511.0px;top:370.5px;letter-spacing:-0.22px;">User Store</div>
<div id="d_sso" class="td" style="left:703.5px;top:370.5px;letter-spacing:-0.15px;">Disabled</div>
<div id="d_mb" class="td" style="left:898.5px;top:370.5px;letter-spacing:-0.5px;">NA</div>
<div id="d_mo" class="td" style="left:1092.0px;top:367.0px;letter-spacing:-0.15px;font-size:10.8px">03 Dec 2021 08:44 UTC</div>
<svg class="abs" style="left:1309px;top:365px" width="21" height="21" viewBox="0 0 21 21"><circle cx="10.5" cy="10.5" r="9.5" fill="#fff" stroke="#d6d8da" stroke-width="1"/><circle cx="5.8" cy="10.5" r="1.3" fill="#b8b8b8"/><circle cx="10.5" cy="10.5" r="1.3" fill="#b8b8b8"/><circle cx="15.2" cy="10.5" r="1.3" fill="#b8b8b8"/></svg>

<div id="scroll" class="abs"></div>
<div id="thumb" class="abs"></div>
<svg class="abs" style="left:1353px;top:77px" width="10" height="6" viewBox="0 0 10 6"><path d="M1 5.5h8L5 1.5z" fill="#a3a3a3"/></svg>
<svg class="abs" style="left:1353px;top:716px" width="10" height="6" viewBox="0 0 10 6"><path d="M1 .5h8L5 4.5z" fill="#505050"/></svg>

<!--TASKBAR-->
<div id="taskbar" class="abs"></div>
<div id="tsearch" class="abs"></div>
<svg class="abs" style="left:15px;top:739px" width="18" height="18" viewBox="0 0 18 18"><path d="M1 2.6l6.6-.9v6.8H1zM8.6 1.6L17 .5v8H8.6zM1 9.5h6.6v6.8L1 15.4zM8.6 9.5H17v8l-8.4-1.1z" fill="#fff"/></svg>
<svg class="abs" style="left:59px;top:740px" width="18" height="17" viewBox="0 0 18 17"><circle cx="11" cy="6" r="5" fill="none" stroke="#1a1a1a" stroke-width="1.3"/><path d="M7.3 9.7L1.5 15.5" stroke="#1a1a1a" stroke-width="1.4"/></svg>
<div id="k_search" class="abs" style="left:88.5px;top:741.0px;letter-spacing:-0.69px;font-size:15.8px;line-height:18px;color:#262626;white-space:nowrap">Type here to search</div>
<svg class="abs" style="left:407px;top:739px" width="18" height="18" viewBox="0 0 18 18"><circle cx="9" cy="9" r="7" fill="none" stroke="#fff" stroke-width="2"/></svg>
<svg class="abs" style="left:454px;top:739px" width="19" height="17" viewBox="0 0 19 17"><g fill="none" stroke="#fff" stroke-width="1.3"><rect x="1.5" y="4.5" width="10" height="8"/><path d="M1 1.5h11M1 15.5h11M15 1v3M15 6v5M15 13v3"/></g></svg>
<div class="abs" style="left:571px;top:728px;width:35px;height:40px;background:#3b4655"></div>
<div class="abs" style="left:607px;top:728px;width:2px;height:40px;background:#2d3846"></div>
<div class="abs" style="left:611px;top:728px;width:39px;height:40px;background:#8f5a31"></div>
<div class="abs" style="left:611px;top:766px;width:39px;height:2px;background:#f7630c"></div>
<div class="abs" style="left:495px;top:766px;width:31px;height:2px;background:#76b9ed"></div><div class="abs" style="left:535px;top:766px;width:31px;height:2px;background:#76b9ed"></div><div class="abs" style="left:571px;top:766px;width:35px;height:2px;background:#76b9ed"></div><div class="abs" style="left:655px;top:766px;width:31px;height:2px;background:#76b9ed"></div><div class="abs" style="left:695px;top:766px;width:31px;height:2px;background:#76b9ed"></div><div class="abs" style="left:735px;top:766px;width:30px;height:2px;background:#76b9ed"></div><div class="abs" style="left:774px;top:766px;width:30px;height:2px;background:#76b9ed"></div><div class="abs" style="left:813px;top:766px;width:30px;height:2px;background:#76b9ed"></div><div class="abs" style="left:852px;top:766px;width:30px;height:2px;background:#76b9ed"></div><div class="abs" style="left:891px;top:766px;width:30px;height:2px;background:#76b9ed"></div><div class="abs" style="left:930px;top:766px;width:30px;height:2px;background:#76b9ed"></div><div class="abs" style="left:969px;top:766px;width:30px;height:2px;background:#76b9ed"></div><div class="abs" style="left:1008px;top:766px;width:30px;height:2px;background:#76b9ed"></div>
<svg class="abs" style="left:498px;top:738px" width="24" height="20" viewBox="0 0 24 20"><path d="M1 1h8l2 2h12v15H1z" fill="#f4c33f"/><path d="M1 5h22v13H1z" fill="#ffd95a"/><path d="M5 18v-6h14v6h-3v-3H8v3z" fill="#2b86d6"/></svg>
<svg class="abs" style="left:538px;top:737px" width="25" height="22" viewBox="0 0 25 22"><path d="M1 2l8-1v21l-8-2z" fill="#4aa7ef"/><path d="M9 1l6 1v18l-6 2z" fill="#1f7fd6"/><path d="M3 5h4M3 9h4M3 13h4" stroke="#b6dcff" stroke-width="1"/><circle cx="17" cy="10" r="6.5" fill="#c8c8c8"/><circle cx="17" cy="10" r="5.5" fill="#e6e6e6"/><circle cx="17" cy="10" r="1.6" fill="#7b7b7b"/></svg>
<svg class="abs" style="left:578px;top:736px" width="22" height="22" viewBox="0 0 22 22"><circle cx="11" cy="11" r="11" fill="#db4437"/><path d="M11 11L1.5 5.5A11 11 0 0 0 11 22z" fill="#0f9d58"/><path d="M11 11V22A11 11 0 0 0 20.5 5.5z" fill="#ffcd40"/><path d="M11 6h9.5A11 11 0 0 0 1.5 5.5L6.2 13.7z" fill="#db4437"/><circle cx="11" cy="11" r="5" fill="#fff"/><circle cx="11" cy="11" r="4" fill="#4285f4"/></svg>
<svg class="abs" style="left:618px;top:736px" width="24" height="22" viewBox="0 0 24 22"><path d="M11 3h12v15H11z" fill="#fff"/><path d="M11 4l6 6 6-6" stroke="#0a64c8" stroke-width="1.3" fill="none"/><path d="M1 3l13-3v22L1 19z" fill="#0a6fd6"/><ellipse cx="7" cy="11" rx="3" ry="4" fill="none" stroke="#fff" stroke-width="1.8"/></svg>
<svg class="abs" style="left:658px;top:736px" width="24" height="24" viewBox="0 0 24 24"><rect width="24" height="24" rx="2" fill="#4a3780"/><circle cx="12" cy="12" r="9.3" fill="none" stroke="#d9d9d9" stroke-width="2.6" stroke-dasharray="2.6 1.5"/><circle cx="12" cy="12" r="7.2" fill="#2b2230"/><text x="12" y="11" font-family="Liberation Sans" font-weight="bold" font-size="6.3" text-anchor="middle" fill="#f08a24">Java EE</text><text x="12" y="17.5" font-family="Liberation Sans" font-weight="bold" font-size="6.5" text-anchor="middle" fill="#f08a24">IDE</text></svg>
<svg class="abs" style="left:699px;top:736px" width="22" height="24" viewBox="0 0 22 24"><path d="M1 1h13l4 4v18H1z" fill="#cfe98a"/><path d="M1 1h13l4 4v6H1z" fill="#f1f1f1"/><path d="M1 14h17v9H1z" fill="#7ac943"/><path d="M5 5v8M7 8h4" stroke="#333" stroke-width="1.2"/><path d="M19 1.5l2 1.2-8 13-2-1.2z" fill="#f4c542"/><path d="M19 1.5l2 1.2.8-1.3-2-1.2z" fill="#d44"/></svg>
<svg class="abs" style="left:738px;top:736px" width="24" height="24" viewBox="0 0 24 24"><circle cx="12" cy="12" r="12" fill="#fff"/><path d="M5 9Q6 3 12 3q6 0 8 5 1 3-1 5l-3 1v4l-2 1v-4l-2 .5v4q-4 .5-7-2 .5-3 .5-6Q3 10 5 9z" fill="#f4f2ef" stroke="#3d2b22" stroke-width="1.3"/><path d="M4 6q2-3 5-3" stroke="#3d2b22" stroke-width="1.3" fill="none"/><ellipse cx="15.5" cy="9" rx="1.8" ry="1.3" fill="#3d2b22"/><path d="M12 19.5v4l2 .3v-4.3zM9 20l-1 3.5 2 .4.3-3.6z" fill="#3d2b22"/></svg>
<svg class="abs" style="left:777px;top:736px" width="24" height="24" viewBox="0 0 24 24"><defs><linearGradient id="eg" x1="0" y1="0" x2="1" y2="1"><stop offset="0" stop-color="#36c3e8"/><stop offset=".6" stop-color="#2bb673"/><stop offset="1" stop-color="#51d66b"/></linearGradient></defs><circle cx="12" cy="12" r="12" fill="url(#eg)"/><path d="M1 10Q3 2 12 1.5q9 0 11 9-1 3-5 3-3.5 0-4-2.5 3 0 3-2.5Q16 4 10 5 3 7 1 10z" fill="#1ea9e0"/><path d="M.5 12q1 11 11.5 12 6.5 0 10.5-5.5Q17 21 13 19q-4-2-3-7-7 0-9.5 0z" fill="#0c5fb3"/><path d="M10 12q-1 5 3 7 2 1 5 .5-6 3-10-1-3-3-2-6.5z" fill="#1689d6"/></svg>
<svg class="abs" style="left:815px;top:736px" width="28" height="26" viewBox="0 0 28 26"><circle cx="19" cy="4" r="3" fill="#7b83eb"/><circle cx="24" cy="6" r="2.3" fill="#5059c9"/><path d="M13 9h11v8a6 6 0 0 1-11 0z" fill="#7b83eb"/><rect x="1" y="6" width="13" height="13" rx="1" fill="#4b53bc"/><path d="M4 9h7M7.5 9v8" stroke="#fff" stroke-width="2"/><circle cx="19" cy="18" r="7.5" fill="#c4314b"/><text x="19" y="22" font-family="Liberation Sans" font-weight="bold" font-size="10" text-anchor="middle" fill="#fff">9+</text></svg>
<svg class="abs" style="left:855px;top:736px" width="24" height="24" viewBox="0 0 24 24"><circle cx="12" cy="12" r="11" fill="#ef5b25"/><path d="M5.5 18.5L15 9l2 2-9.5 9.5z" fill="#f7b39a"/><circle cx="16.5" cy="7.5" r="2" fill="#fff"/><path d="M6 18l8.5-8.5" stroke="#fff" stroke-width="1.2"/></svg>
<svg class="abs" style="left:894px;top:736px" width="24" height="24" viewBox="0 0 24 24"><circle cx="12" cy="12" r="11" fill="#6e3aa8"/><circle cx="12" cy="12" r="8" fill="#ececec"/><path d="M8 18q-1-2 0-3-2-2-1-5l.5-2 2 1q2-.7 5 0l2-1 .5 2q1 3-1 5 1 1 0 3z" fill="#6e3aa8"/></svg>
<svg class="abs" style="left:933px;top:736px" width="24" height="24" viewBox="0 0 24 24"><path d="M11 4h11v16H11z" fill="#fff"/><path d="M13 7h8M13 10h8M13 13h8M13 16h8" stroke="#80397b" stroke-width="1.2"/><path d="M1 2.5L14 0v24L1 21.5z" fill="#80397b"/><path d="M4.5 16.5V7.5l5 9V7.5" stroke="#fff" stroke-width="1.8" fill="none"/></svg>
<svg class="abs" style="left:972px;top:737px" width="23" height="21" viewBox="0 0 23 21"><rect x=".5" y=".5" width="22" height="20" fill="#000" stroke="#bfbfbf" stroke-width="1"/><path d="M1 1h21v2H1z" fill="#cfcfcf"/><text x="3" y="9" font-family="Liberation Mono" font-size="5" fill="#ddd">C:\</text><path d="M12 8h8" stroke="#ddd" stroke-width="1"/></svg>
<div class="abs" style="left:991px;top:766px;width:8px;height:2px;background:#5a8fbf"></div>
<svg class="abs" style="left:1011px;top:736px" width="24" height="24" viewBox="0 0 24 24"><path d="M11 4h11v16H11z" fill="#fff"/><path d="M13 7h8M13 10.5h8M13 14h8M13 17.5h8M17 5v14" stroke="#1f7145" stroke-width="1"/><path d="M1 2.5L14 0v24L1 21.5z" fill="#1f7145"/><path d="M4.5 7.5l5 9M9.5 7.5l-5 9" stroke="#fff" stroke-width="1.8"/></svg>
<svg class="abs" style="left:1069px;top:739px" width="22" height="17" viewBox="0 0 22 17"><circle cx="7" cy="6.5" r="5.5" fill="#f7c948"/><path d="M6 16.5a4 4 0 0 1-.6-8 6 6 0 0 1 11.3 1.5 3.3 3.3 0 0 1 .3 6.5z" fill="#d8ecfa"/><path d="M6 16.5a4 4 0 0 1-3-2h17a3.3 3.3 0 0 1-3 2z" fill="#b9dcf3"/></svg>
<div id="k_temp" class="abs" style="left:1100.5px;top:739.5px;letter-spacing:-1.5px;font-size:15px;line-height:18px;color:#fff;white-space:nowrap">29°C</div>
<svg class="abs" style="left:1146px;top:743px" width="14" height="10" viewBox="0 0 14 10"><path d="M1 8.5l6-6 6 6" fill="none" stroke="#fff" stroke-width="1.4"/></svg>
<svg class="abs" style="left:1168px;top:742px" width="18" height="14" viewBox="0 0 18 14"><path d="M1 4.5h3L8 1v12L4 9.5H1z" fill="none" stroke="#fff" stroke-width="1.1"/><path d="M10.5 4.5q1.5 2.5 0 5M13 3q2.5 4 0 8M15.5 1.5q3.5 5.5 0 11" fill="none" stroke="#fff" stroke-width="1.1"/></svg>
<svg class="abs" style="left:1192px;top:744px" width="18" height="10" viewBox="0 0 18 10"><path d="M3.5 9.5a3 3 0 0 1-.3-6A5 5 0 0 1 12 2.5a3.5 3.5 0 0 1 2.8 1.6A2.8 2.8 0 0 1 15.5 9.5z" fill="#1e88e5"/><path d="M3.5 9.5a3 3 0 0 1-2.5-2.5h16a2.8 2.8 0 0 1-1.5 2.5z" fill="#0f5fb8"/></svg>
<div id="k_eng" class="abs" style="left:1219.5px;top:732.0px;letter-spacing:-1.5px;font-size:11.6px;line-height:14px;color:#fff;white-space:nowrap">ENG</div>
<div id="k_us" class="abs" style="left:1224.0px;top:749.0px;letter-spacing:-2.5px;font-size:11.6px;line-height:14px;color:#fff;white-space:nowrap">US</div>
<div id="k_time" class="abs" style="left:1260.0px;top:733.0px;letter-spacing:-0.67px;font-size:12.4px;line-height:14px;color:#fff;white-space:nowrap">6:21 PM</div>
<div id="k_date" class="abs" style="left:1256.0px;top:750.0px;letter-spacing:-0.62px;font-size:12.4px;line-height:14px;color:#fff;white-space:nowrap">12/6/2021</div>
<svg class="abs" style="left:1324px;top:739px" width="27" height="26" viewBox="0 0 27 26"><path d="M1 1h16.5v13H9l-4 4v-4H1z" fill="#fff"/><path d="M4 4.5h10.5M4 7.5h10.5M4 10.5h10.5" stroke="#1b2434" stroke-width="1.1"/><circle cx="16.7" cy="16" r="9" fill="#2e2e2e" stroke="#6a6a6a" stroke-width="1"/><text x="16.7" y="20.5" font-family="Liberation Sans" font-size="12.5" text-anchor="middle" fill="#fff" letter-spacing="-1">10</text></svg>
<div class="abs" style="left:1361px;top:728px;width:1px;height:40px;background:#5a6576"></div>
</body></html>
